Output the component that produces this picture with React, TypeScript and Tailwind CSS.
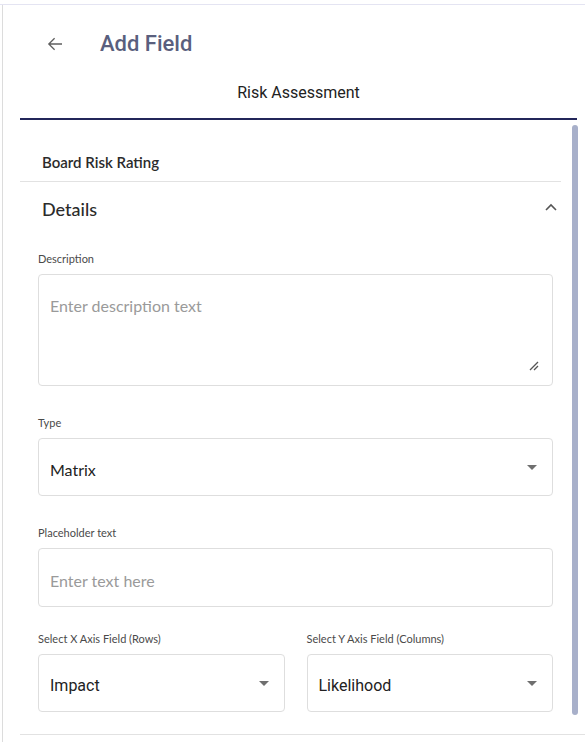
const LATO = "font-['Lato','Noto_Sans',sans-serif]";
const ROBOTO = "font-['Roboto','Liberation_Sans',sans-serif]";

function Caret() {
  return (
    <svg width="10" height="5" viewBox="0 0 10 5" className="shrink-0">
      <path d="M0 0h10L5 5z" fill="#6f6f6f" />
    </svg>
  );
}

function FieldLabel({ children }: { children: string }) {
  return (
    <div className={`${LATO} text-[11px] leading-[14px] text-[#4a4a4a] mb-[8px]`}>
      {children}
    </div>
  );
}

function SelectBox({ value, font }: { value: string; font: string }) {
  return (
    <div className="flex h-[58px] items-center justify-between rounded-[4px] border border-[#dedede] bg-white pl-[11px] pr-[15px]">
      <span className={`${font} text-[16px] text-[#222] pt-[5px]`}>{value}</span>
      <Caret />
    </div>
  );
}

export default function App() {
  return (
    <div className="w-[585px] h-[742px] overflow-hidden bg-white">
      <div className="mt-[4px] h-[738px] border-t border-[#e4e4f2]">
        <div className="ml-[2px] h-full border-l border-[#dcdcdc] pl-[17px] flex flex-col">
          {/* header */}
          <div className="flex h-[75px] items-center pl-[27px] pt-[2px]">
            <svg width="16" height="16" viewBox="0 0 16 16" className="shrink-0">
              <path d="M15 8H1.8M7.6 2.2 1.8 8l5.8 5.8" fill="none" stroke="#5f5f5f" strokeWidth="1.3" />
            </svg>
            <h1 className={`${ROBOTO} ml-[37px] text-[22px] font-medium leading-[28px] text-[#5a5f7e]`}>
              Add Field
            </h1>
          </div>

          {/* tab */}
          <div className="w-[557px] border-b-2 border-[#23265a] pb-[13px] text-center">
            <span className={`${ROBOTO} text-[16px] text-[#222]`}>Risk Assessment</span>
          </div>

          <div className="flex h-[614px]">
            <div className="w-[541px]">
              <div className="flex h-[62px] items-end border-b border-[#e2e2e2] pb-[9px] pl-[22px]">
                <span className={`${LATO} text-[15px] font-semibold leading-[20px] text-[#2b2b2b]`}>
                  Board Risk Rating
                </span>
              </div>

              <div className="flex h-[54px] items-center justify-between pl-[22px] pr-[3px]">
                <span className={`${LATO} text-[18px] font-medium text-[#2b2b2b]`}>Details</span>
                <svg width="14" height="9" viewBox="0 0 14 9" className="-mt-[3px]">
                  <path d="M2 7l5-5 5 5" fill="none" stroke="#555" strokeWidth="1.6" />
                </svg>
              </div>

              <div className="pl-[18px] pr-[8px] pt-[16px]">
                <FieldLabel>Description</FieldLabel>
                <div className="relative h-[112px] rounded-[4px] border border-[#dedede] px-[11px] pt-[19px]">
                  <span className={`${LATO} text-[16px] text-[#9a9a9a]`}>Enter description text</span>
                  <svg width="10" height="10" viewBox="0 0 10 10" className="absolute right-[13px] bottom-[14px]">
                    <path d="M9 1 1 9M9 5 5 9" fill="none" stroke="#555" strokeWidth="1.3" />
                  </svg>
                </div>

                <div className="mt-[30px]">
                  <FieldLabel>Type</FieldLabel>
                  <SelectBox value="Matrix" font={LATO} />
                </div>

                <div className="mt-[30px]">
                  <FieldLabel>Placeholder text</FieldLabel>
                  <div className="flex h-[59px] items-center rounded-[4px] border border-[#dedede] px-[11px] pt-[6px]">
                    <span className={`${LATO} text-[16px] text-[#9a9a9a]`}>Enter text here</span>
                  </div>
                </div>

                <div className="mt-[25px] grid grid-cols-2 gap-[22px]">
                  <div>
                    <FieldLabel>Select X Axis Field (Rows)</FieldLabel>
                    <SelectBox value="Impact" font={ROBOTO} />
                  </div>
                  <div>
                    <FieldLabel>Select Y Axis Field (Columns)</FieldLabel>
                    <SelectBox value="Likelihood" font={ROBOTO} />
                  </div>
                </div>
              </div>
            </div>

            {/* scrollbar thumb */}
            <div className="ml-[11px] pt-[5px]">
              <div className="h-[590px] w-[6px] rounded-[3px] bg-[#a8b0ca]" />
            </div>
          </div>

          <div className="border-t border-[#e2e2e2]" />
        </div>
      </div>
    </div>
  );
}
